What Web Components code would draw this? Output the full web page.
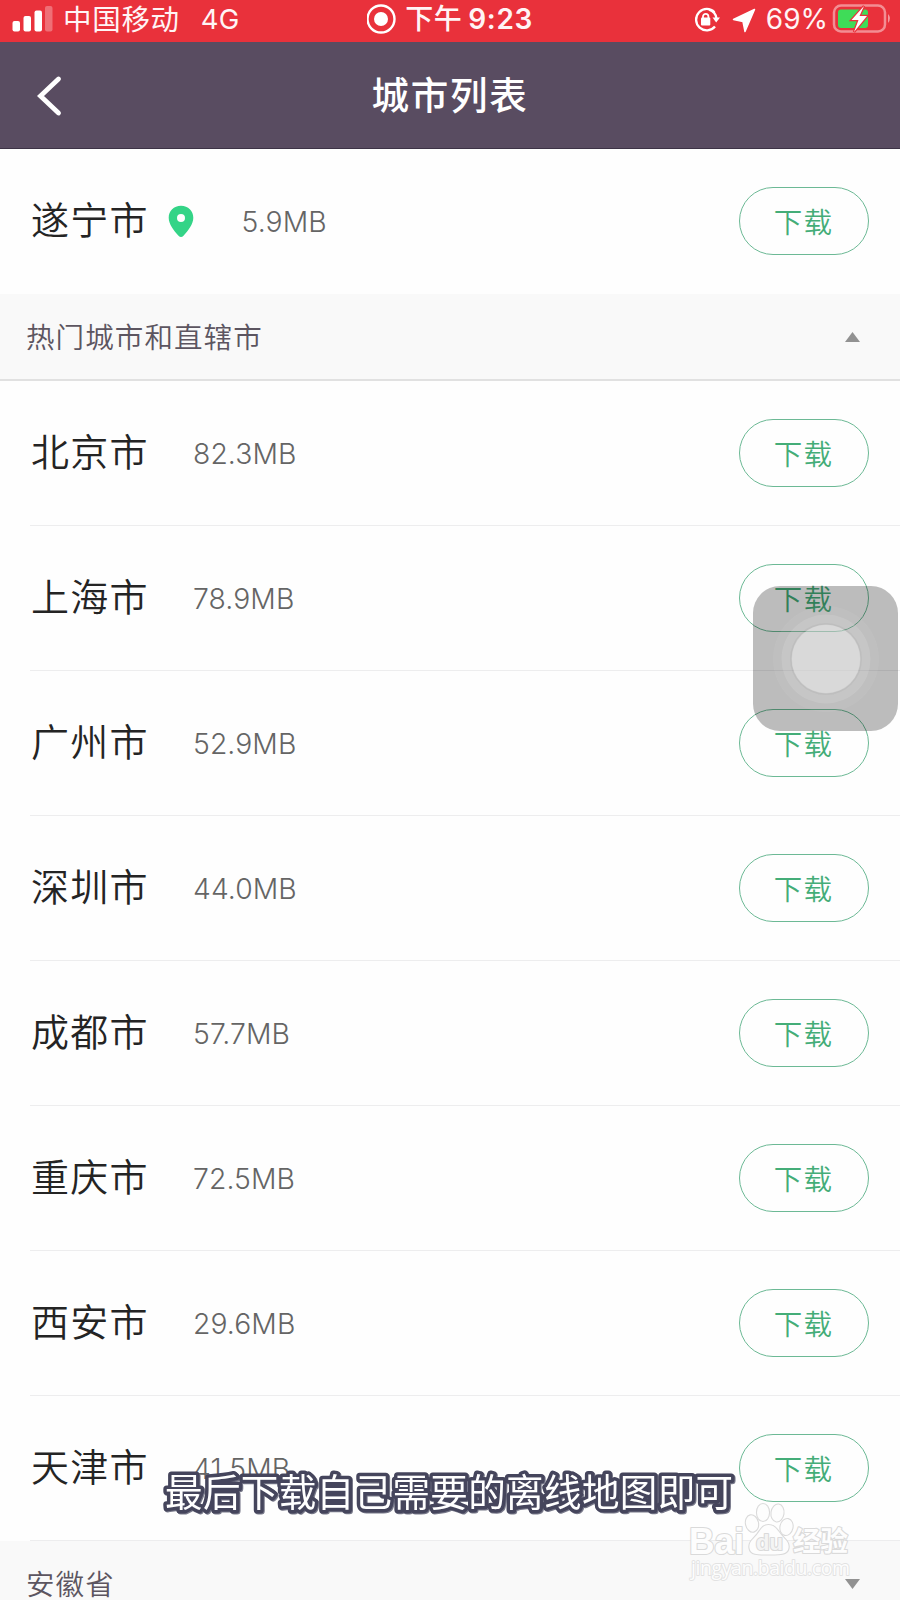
<!DOCTYPE html>
<html lang="zh-CN">
<head>
<meta charset="utf-8">
<title>城市列表</title>
<style>
html,body{margin:0;padding:0;background:#fefefe}
body{width:900px;height:1600px;overflow:hidden;position:relative;font-family:Inter,"Noto Sans CJK SC",sans-serif}
</style>
</head>
<body>
<city-app></city-app>
<script>
const define = (name, html, setup) => {
  const t = document.createElement('template');
  t.innerHTML = html;
  customElements.define(name, class extends HTMLElement {
    connectedCallback() {
      if (this.shadowRoot) return;
      this.attachShadow({mode: 'open'}).append(t.content.cloneNode(true));
      if (setup) setup(this, this.shadowRoot);
    }
  });
};

define('status-bar', `
<style>
:host{display:grid;grid-template-columns:1fr auto 1fr;height:42px;background:#e9313b;color:#fff4f5;align-items:center;white-space:nowrap;font:400 28px/36px Inter,"Noto Sans CJK SC",sans-serif;box-sizing:border-box;padding:0 12px 4px}
div{display:flex;align-items:center;height:36px}
svg{display:block;flex:none}
.carrier{font-size:28.5px;letter-spacing:.7px;margin-left:9px;padding-top:1px}
.net{font-size:27.5px;margin-left:21px;letter-spacing:.2px}
.mid{font-weight:600;letter-spacing:.6px}
.mid span{font-size:28px}
.mid .zh{font-weight:500;margin-left:9px;margin-right:6px}
.right{justify-content:flex-end}
.pct{font-size:28px;margin:0 4px 0 9px;letter-spacing:0}
</style>
<div>
<svg width="42" height="30" viewBox="12 3 42 30"><g fill="#fff"><rect x="12.500" y="20" width="7.500" height="10.500" rx="2"/><rect x="23.500" y="15" width="7.500" height="15.500" rx="2"/><rect x="34.500" y="9.500" width="7.500" height="21" rx="2"/><rect x="45" y="5" width="7.500" height="25.500" rx="2" opacity=".3"/></g></svg>
<span class="carrier">中国移动</span><span class="net">4G</span>
</div>
<div class="mid">
<svg width="29" height="32" viewBox="0.500 0 29 32"><circle cx="14.500" cy="16" r="13.500" fill="none" stroke="#fff" stroke-width="2.400"/><circle cx="14.500" cy="16" r="7" fill="#fff"/></svg>
<span class="zh">下午</span><span>9:23</span>
</div>
<div class="right">
<svg width="64" height="32" viewBox="693 2 64 32"><g fill="none" stroke="#fff" stroke-width="2.300"><path d="M714.500 11.200A10.700 10.700 0 1 0 715 25.500M709 8.600a10.700 10.700 0 0 1 7.500 9"/><path d="M703 17v-1.500a2.700 2.700 0 0 1 5.400 0V17" stroke-width="1.800"/></g><rect x="701" y="16.500" width="9.300" height="8" rx="1" fill="#fff"/><path d="M712.500 16.500h7.500l-3.800 5z" fill="#fff"/><path d="M754.500 8.500 733.500 18.500l9.500 2 2 10z" fill="#fff" stroke="#fff" stroke-width="1.500" stroke-linejoin="round"/></svg>
<span class="pct">69%</span>
<svg width="60" height="34" viewBox="831 1 60 34" style="margin-right:-4px"><rect x="833" y="4.500" width="51" height="26" rx="7" fill="none" stroke="#fff" stroke-opacity=".45" stroke-width="2.500"/><rect x="837" y="8.500" width="30" height="18.500" rx="3" fill="#3fdc58"/><path d="M887 13q4 4 0 9z" fill="#fff" opacity=".5"/><path d="M863 5 850.500 19h7l-4.500 12 13-16h-7.500z" fill="#fff" stroke="#e9313b" stroke-width="2.500" paint-order="stroke"/></svg>
</div>`);

define('nav-bar', `
<style>
:host{display:grid;grid-template-columns:120px 1fr 120px;align-items:center;height:107px;background:#594c61;border-bottom:1px solid #3d3346;box-sizing:border-box;color:#fff}
h1{margin:0;text-align:center;font:500 37.500px/52px "Noto Sans CJK SC",sans-serif;letter-spacing:1.800px;padding-bottom:4px}
svg{display:block}
</style>
<svg width="120" height="105" viewBox="0 42.500 120 105"><path d="M58.500 78.500 40.500 95.500 58.500 112.500" fill="none" stroke="#fff" stroke-width="4.800" stroke-linecap="round"/></svg>
<h1><slot></slot></h1>`);

define('download-button', `
<style>
:host{display:block;flex:none}
button{display:block;width:130px;height:68px;box-sizing:border-box;border:1.500px solid #6cb995;border-radius:34px;background:transparent;color:#44ad78;font:350 28.500px/62px "Noto Sans CJK SC",sans-serif;letter-spacing:1.200px;padding:0 1px 1px 0;margin:0}
</style>
<button><slot></slot></button>`);

define('map-pin', `
<style>:host{display:block;flex:none}svg{display:block}</style>
<svg width="26" height="33" viewBox="0 0 26 33"><path fill="#34d487" fill-rule="evenodd" d="M13 .8C5.800.8.700 6 .700 12.700c0 6.500 5.200 13 9.800 18 1.500 1.600 3.500 1.600 5 0 4.600-5 9.800-11.500 9.800-18C25.300 6 20.200.8 13 .8zm0 8.300a4 4 0 1 1 0 8 4 4 0 0 1 0-8z"/></svg>`);

define('city-row', `
<style>
:host{display:flex;align-items:center;height:145px;box-sizing:border-box;margin-left:30px;padding-right:31px;border-bottom:1.500px solid #ededee}
:host([current]){border-bottom:0;padding-bottom:1px}
.name{font:350 38px/54px "Noto Sans CJK SC",sans-serif;letter-spacing:1.300px;color:#242424;margin-left:1px;width:118px;white-space:nowrap;padding-bottom:6px}
.size{font:350 28.300px/40px Inter,sans-serif;color:#656565;margin-left:44px;flex:1;letter-spacing:.1px;padding-top:1px}
map-pin{margin-left:18.500px}
:host([current]) .size{margin-left:48px}
:host(:not([current])) map-pin{display:none}
</style>
<span class="name"><slot></slot></span><map-pin></map-pin><span class="size"></span><download-button>下载</download-button>`,
(el, root) => root.querySelector('.size').textContent = el.getAttribute('size'));

define('section-header', `
<style>
:host{display:flex;align-items:center;justify-content:space-between;height:87px;box-sizing:border-box;background:#f9f9f9;border-bottom:2px solid #e1e1e1;padding:0 40px 0 26px;color:#5c5560;font:350 28.500px/40px "Noto Sans CJK SC",sans-serif;letter-spacing:1.100px}
span{padding-bottom:2px}
svg{display:block}
:host([closed]) svg{transform:rotate(180deg)}
</style>
<span><slot></slot></span>
<svg width="15" height="10" viewBox="0 0 15 10"><path d="M7.500 0 15 10H0z" fill="#929292"/></svg>`);

define('assistive-touch', `
<style>:host{position:absolute;left:753px;top:586px;width:145px;height:145px;border-radius:27px;background:rgba(0,0,0,.26)}svg{display:block}</style>
<svg width="145" height="145"><g fill="#fff"><circle cx="73" cy="73" r="53" opacity=".06"/><circle cx="73" cy="73" r="44.500" opacity=".12"/><circle cx="73" cy="73" r="34.500" opacity=".34"/></g><circle cx="73" cy="73" r="35" fill="none" stroke="#000" stroke-opacity=".04" stroke-width="2"/></svg>`);

define('video-caption', `
<style>:host{position:absolute;left:150px;top:1460px;width:610px;height:70px}svg{display:block}text{font:400 37.500px "Noto Sans CJK SC",sans-serif;letter-spacing:.4px;stroke-linejoin:round}.c{filter:drop-shadow(1.500px 1.500px .5px #777889)}</style>
<svg width="610" height="70"><text class="c" x="15" y="45.500" fill="#fff" stroke="#45455c" stroke-width="7" paint-order="stroke">最后下载自己需要的离线地图即可</text></svg>`);

define('baidu-mark', `
<style>:host{position:absolute;left:684px;top:1498px;width:175px;height:90px}svg{display:block}
text,ellipse,path{fill:#fdfdfd;stroke:#dadada;stroke-width:2.200;paint-order:stroke;stroke-linejoin:round}
.l{font:700 37px "Liberation Sans",sans-serif}.d{font:700 22px "Liberation Sans",sans-serif;fill:#f4f4f4}.z{font:700 27.500px "Noto Sans CJK SC",sans-serif}.u{font:400 19.500px "Open Sans",sans-serif;stroke:#e2e2e2;stroke-width:1.800}
</style>
<svg width="175" height="90">
<text class="l" x="5" y="56" textLength="55" lengthAdjust="spacingAndGlyphs">Bai</text>
<g><ellipse cx="68" cy="25.500" rx="6" ry="8.300" transform="rotate(-12 68 25.500)"/><ellipse cx="79" cy="14.500" rx="6" ry="8.500"/><ellipse cx="93.500" cy="15" rx="6" ry="8.500" transform="rotate(8 93.500 15)"/><ellipse cx="102.500" cy="29" rx="6" ry="8" transform="rotate(12 102.500 29)"/>
<path d="M84.500 27c-6 0-8 5-11 9-4 5-9 8-8 14 1 7 9 6.500 19 6.500s19 .5 20-6.500c1-6-4-9-8-14-3-4-6-9-12-9z"/></g>
<text class="d" x="72" y="51.500">du</text>
<text class="z" x="109" y="53">经验</text>
<text class="u" x="7" y="77" textLength="159">jingyan.baidu.com</text>
</svg>`);

define('city-app', `
<style>:host{display:flex;flex-direction:column;width:900px;height:1600px;overflow:hidden;position:relative;background:#fefefe}:host>*{flex:none}</style>
<status-bar></status-bar>
<nav-bar>城市列表</nav-bar>
<city-row current size="5.9MB">遂宁市</city-row>
<section-header>热门城市和直辖市</section-header>
<city-row size="82.3MB">北京市</city-row>
<city-row size="78.9MB">上海市</city-row>
<city-row size="52.9MB">广州市</city-row>
<city-row size="44.0MB">深圳市</city-row>
<city-row size="57.7MB">成都市</city-row>
<city-row size="72.5MB">重庆市</city-row>
<city-row size="29.6MB">西安市</city-row>
<city-row size="41.5MB">天津市</city-row>
<section-header closed>安徽省</section-header>
<assistive-touch></assistive-touch>
<video-caption></video-caption>
<baidu-mark></baidu-mark>`);
</script>
</body>
</html>
